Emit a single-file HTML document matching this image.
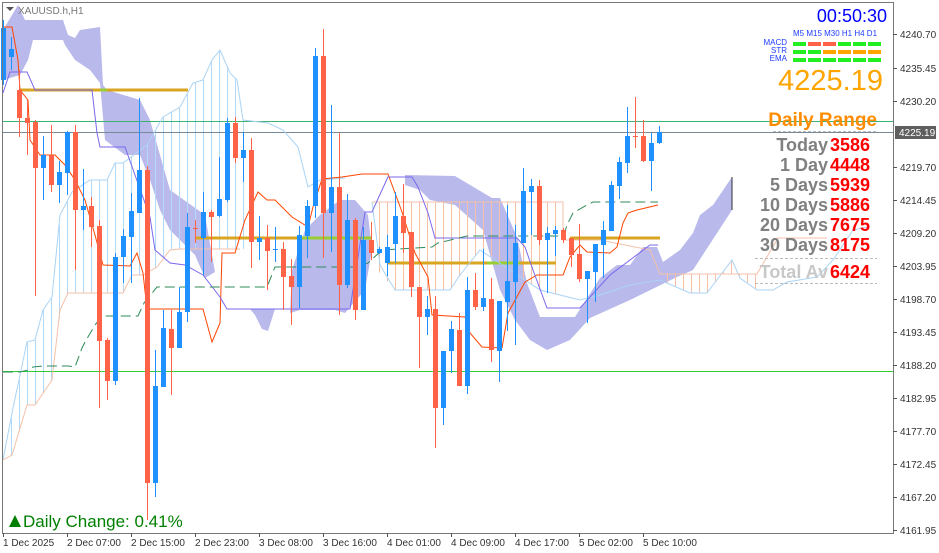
<!DOCTYPE html>
<html><head><meta charset="utf-8"><style>
body{margin:0;background:#fff;width:939px;height:553px;overflow:hidden;font-family:"Liberation Sans",sans-serif}
svg{position:absolute;left:0;top:0}
.ax{font:10px "Liberation Sans",sans-serif;fill:#333}
.b{font-weight:bold}
</style></head><body>
<svg id="s" width="939" height="553" xmlns="http://www.w3.org/2000/svg">
<rect x="0" y="0" width="939" height="553" fill="#fff"/>
<g fill="#b9b9ec">
<polygon points="3,30 18,5 25,20 33,20 63,20 68,35 75,38 80,30 100,27 103,85 107,90 140,100 150,120 170,190 205,215 215,272 205,278 195,255 185,245 170,230 160,210 150,180 140,155 125,155 105,140 100,83 90,70 75,60 65,45 63,40 33,40 28,60 20,75 3,80"/>
<polygon points="250,309 275,309 268,331 262,329 255,315"/>
<polygon points="292,270 305,230 320,215 340,200 355,200 368,215 372,250 365,290 345,313 335,310 300,310 290,313"/>
<polygon points="405,175 455,176 492,198 500,198 517,237 527,283 540,317 575,317 600,278 617,265 630,265 643,247 657,247 663,262 680,250 693,233 700,215 713,205 732,177 732,210 693,270 677,277 630,300 590,318 570,340 547,350 530,340 515,320 500,290 483,230 455,205 430,200 420,190 405,185"/>
</g>
<line x1="732" y1="177" x2="732" y2="210" stroke="#333"/>
<g id="hatch" stroke-width="1"></g>
<line x1="3" y1="121.5" x2="893" y2="121.5" stroke="#3cb371"/>
<line x1="3" y1="132.5" x2="893" y2="132.5" stroke="#778899"/>
<line x1="3" y1="371.5" x2="893" y2="371.5" stroke="#32cd32"/>
<g stroke="#daa520" stroke-width="3">
<line x1="20" y1="90" x2="188" y2="90"/>
<line x1="195" y1="238" x2="372" y2="238"/>
<line x1="387" y1="263" x2="556" y2="263"/>
<line x1="570" y1="238" x2="660" y2="238"/>
</g>
<g stroke="#9acd32" stroke-width="3">
<line x1="100" y1="90" x2="107" y2="90"/>
<line x1="302" y1="238" x2="372" y2="238"/>
<line x1="487" y1="263" x2="520" y2="263"/>
</g>
<g fill="none" stroke-width="1">
<polyline stroke="#aad4f5" points="3,460 13,408 27,342 35,340 43,310 52,297 60,215 72,192 90,180 107,180 115,163 123,163 147,145 163,117 180,107 193,83 203,80 212,60 220,50 230,73 237,80 243,120 268,123 283,130 298,147 308,187 320,180 345,178"/>
<polyline stroke="#f5c0a8" points="3,460 12,455 27,405 35,405 52,380 60,310 68,293 123,293 132,275 143,275 157,267 170,250 180,249 200,249 240,249"/>
<polyline stroke="#aad4f5" points="372,202 380,265 395,290 450,290 460,275 480,250 510,270 540,290 580,300 600,295 630,285 660,280 690,293 707,293 732,260 740,278 757,290 773,290 787,282 817,277 833,260 853,230 868,227"/>
<polyline stroke="#f5c0a8" points="372,202 563,202 563,240 600,240 650,250 660,274 757,274 778,238 827,238"/>
<polyline stroke="#ff4500" points="3,27 12,27 18,60 20,90 28,100 30,140 40,155 55,155 65,165 75,180 85,200 95,235 103,265 130,266 137,253 143,273 147,309 203,309 212,342 220,323 222,253 235,253 245,220 258,192 267,200 275,200 292,217 308,227 313,207 322,179 342,177 362,174 388,174 395,193 402,212 415,253 428,277 432,315 465,317 470,333 482,347 502,348 508,313 525,282 537,275 563,275 570,257 580,245 587,252 610,253 617,247 623,223 628,213 637,210 658,205"/>
<polyline stroke="#7b68ee" points="3,93 10,72 27,72 35,90 92,90 97,133 100,147 125,147 150,217 155,250 170,263 185,265 203,275 220,297 227,309 350,309 365,212 372,212 382,190 388,177 412,177 418,187 428,213 435,238 517,238 525,247 533,270 547,308 580,308 610,275 650,245 658,245"/>
<polyline stroke="#2e8b57" stroke-dasharray="10,5" points="3,372 20,372 28,370 33,367 43,366 68,366 75,367 82,348 85,342 95,325 102,316 138,316 144,303 157,287 267,287 275,267 358,267 368,263 382,250 432,247 438,243 467,236 563,236 568,223 573,213 587,205 593,202 658,202"/>
</g>
<g id="c"></g>
<rect x="2.5" y="2.5" width="891" height="531" fill="none" stroke="#777"/>
<g id="ax"></g>
<rect x="895" y="126" width="41" height="13" fill="#5f5f5f"/>
<text x="899" y="136" font-size="10" fill="#fff" font-family="Liberation Sans">4225.19</text>
<text x="18" y="14" font-size="10" fill="#777" font-family="Liberation Sans">XAUUSD.h,H1</text>
<polygon points="6,7 14,7 10,11" fill="#555"/>
<text x="887" y="22" font-size="18" fill="#0000ff" text-anchor="end">00:50:30</text>
<text x="793" y="36" font-size="8" fill="#1e3cff">M5 M15 M30 H1 H4 D1</text>
<text x="787" y="45" font-size="8" fill="#1e3cff" text-anchor="end">MACD</text>
<text x="787" y="53" font-size="8" fill="#1e3cff" text-anchor="end">STR</text>
<text x="787" y="61" font-size="8" fill="#1e3cff" text-anchor="end">EMA</text>
<g id="sq"></g>
<text x="883" y="90" font-size="29" fill="#ffa500" text-anchor="end">4225.19</text>
<text x="877" y="126" font-size="19" fill="#ff8c00" class="b" text-anchor="end">Daily Range</text>
<g stroke="#bbb" stroke-dasharray="3,2"><line x1="773" y1="131.5" x2="877" y2="131.5"/><line x1="755" y1="258.5" x2="877" y2="258.5"/><line x1="755" y1="283.5" x2="877" y2="283.5"/></g>
<g font-size="18" font-weight="bold">
<text x="828" y="151" fill="#808080" text-anchor="end">Today</text><text x="830" y="151" fill="#ff0000">3586</text>
<text x="828" y="171" fill="#808080" text-anchor="end">1 Day</text><text x="830" y="171" fill="#ff0000">4448</text>
<text x="828" y="191" fill="#808080" text-anchor="end">5 Days</text><text x="830" y="191" fill="#ff0000">5939</text>
<text x="828" y="211" fill="#808080" text-anchor="end">10 Days</text><text x="830" y="211" fill="#ff0000">5886</text>
<text x="828" y="231" fill="#808080" text-anchor="end">20 Days</text><text x="830" y="231" fill="#ff0000">7675</text>
<text x="828" y="251" fill="#808080" text-anchor="end">30 Days</text><text x="830" y="251" fill="#ff0000">8175</text>
<text x="828" y="278" fill="#c8c8c8" text-anchor="end">Total Av</text><text x="830" y="278" fill="#ff0000">6424</text>
</g>
<polygon points="9,527 21,527 15,515" fill="#008000"/>
<text x="23" y="527" font-size="17" fill="#008000">Daily Change: 0.41%</text>
</svg>
<script>
var NS="http://www.w3.org/2000/svg";
function el(p,t,a){var e=document.createElementNS(NS,t);for(var k in a)e.setAttribute(k,a[k]);p.appendChild(e);return e;}
var C=[[3,'b',28,80,20,85],[11,'b',49,57,37,70],[19,'r',90,118,70,137],[27,'r',118,123,100,155],[35,'r',122,168,120,296],[43,'b',155,168,136,200],[51,'r',155,185,125,192],[59,'b',172,185,161,203],[67,'b',132,173,131,195],[75,'r',132,210,125,270],[83,'b',206,210,169,230],[91,'r',206,227,197,247],[99,'r',226,341,220,408],[107,'r',340,381,338,400],[115,'b',257,381,253,385],[123,'b',236,257,229,283],[131,'b',211,237,193,283],[139,'b',170,213,98,213],[147,'r',170,483,166,520],[155,'b',386,483,350,497],[163,'b',328,387,310,387],[171,'r',329,348,310,395],[179,'b',312,348,287,348],[187,'b',227,312,213,322],[195,'r',228,229,220,243],[203,'b',212,238,192,275],[211,'r',212,217,210,262],[219,'b',199,216,157,217],[227,'b',123,200,118,202],[235,'r',123,158,117,163],[243,'b',150,158,132,182],[251,'r',150,242,138,268],[259,'b',238,242,216,260],[267,'r',238,251,225,290],[275,'b',249,250,227,262],[283,'r',249,277,242,310],[291,'r',276,287,259,325],[299,'b',235,287,226,308],[307,'b',206,236,200,258],[315,'b',56,206,48,218],[323,'r',56,213,29,258],[331,'b',187,213,105,252],[339,'r',187,285,133,315],[347,'b',220,285,194,288],[355,'r',220,310,218,320],[363,'b',240,310,227,310],[371,'r',240,253,222,260],[379,'b',249,253,247,254],[387,'b',247,263,235,276],[395,'b',216,244,192,263],[403,'r',216,233,184,253],[411,'r',232,287,232,297],[419,'r',287,317,287,368],[427,'b',309,317,296,335],[435,'r',309,408,296,448],[443,'b',351,408,351,425],[451,'b',329,351,321,373],[459,'r',330,386,313,386],[467,'b',290,386,277,394],[475,'r',290,307,273,310],[483,'b',298,307,249,311],[491,'r',299,350,278,362],[499,'b',301,351,301,382],[507,'b',281,302,205,331],[515,'b',243,282,225,345],[523,'b',191,243,168,243],[531,'b',186,192,179,235],[539,'r',186,240,180,245],[547,'b',233,240,227,293],[555,'b',230,234,226,256],[563,'r',230,240,228,243],[571,'r',238,255,238,267],[579,'r',254,279,224,282],[587,'b',271,279,271,323],[595,'b',244,272,244,302],[603,'b',230,245,221,278],[611,'b',185,231,181,231],[619,'b',162,186,157,199],[627,'b',136,163,107,173],[635,'r',136,137,97,148],[643,'r',136,161,120,162],[651,'b',143,161,133,191],[659,'b',132,143,126,144]];
var g=document.getElementById('c');
C.forEach(function(c){var col=c[1]=='r'?'#ff6347':'#1e90ff';
el(g,'rect',{x:c[0],y:c[4],width:1,height:c[5]-c[4],fill:col});
el(g,'rect',{x:c[0]-2,y:c[2],width:5,height:Math.max(1,c[3]-c[2]),fill:col});});
var h=document.getElementById('hatch');
function hatch(x0,x1,f1,f2,col){for(var x=x0;x<=x1;x+=8){el(h,'line',{x1:x+.5,x2:x+.5,y1:f1(x),y2:f2(x),stroke:col});}}
function interp(pts){return function(x){for(var i=1;i<pts.length;i++){if(x<=pts[i][0]){var a=pts[i-1],b=pts[i];return a[1]+(b[1]-a[1])*(x-a[0])/(b[0]-a[0]);}}return pts[pts.length-1][1];};}
var lb=interp([[3,460],[13,408],[27,342],[35,340],[43,310],[52,297],[60,215],[72,192],[90,180],[107,180],[115,163],[123,163],[147,145],[163,117],[180,107],[193,83],[203,80],[212,60],[220,50],[230,73],[237,80],[243,120],[250,249]]);
var pk=interp([[3,460],[12,455],[27,405],[35,405],[52,380],[60,310],[68,293],[123,293],[132,275],[143,275],[157,267],[170,250],[180,249],[250,249]]);
hatch(11,243,lb,pk,'#b4d8f8');
hatch(379,560,function(){return 202},interp([[372,265],[395,290],[450,290],[460,275],[480,250],[510,270],[540,290],[560,295]]),'#f5c0a8');
hatch(667,755,function(){return 274},interp([[660,280],[690,293],[707,293],[732,260],[740,278],[757,290]]),'#f5c0a8');
var ax=document.getElementById('ax');
var P=[['4240.70',34],['4235.45',68],['4230.20',101],['4219.70',167],['4214.45',200],['4209.20',233],['4203.95',266],['4198.70',299],['4193.45',332],['4188.20',365],['4182.95',398],['4177.70',431],['4172.45',464],['4167.20',497],['4161.95',530]];
P.forEach(function(p){el(ax,'line',{x1:893,x2:897,y1:p[1]+.5,y2:p[1]+.5,stroke:'#555'});var t=el(ax,'text',{x:900,y:p[1]+4,'class':'ax'});t.textContent=p[0];});
var T=[['1 Dec 2025',3],['2 Dec 07:00',67],['2 Dec 15:00',131],['2 Dec 23:00',195],['3 Dec 08:00',259],['3 Dec 16:00',323],['4 Dec 01:00',387],['4 Dec 09:00',451],['4 Dec 17:00',515],['5 Dec 02:00',579],['5 Dec 10:00',643]];
T.forEach(function(p){el(ax,'line',{x1:p[1]+.5,x2:p[1]+.5,y1:533,y2:537,stroke:'#555'});var t=el(ax,'text',{x:p[1],y:546,'class':'ax'});t.textContent=p[0];});
var sq=document.getElementById('sq');
var R=[['#22ee22','#ff6347','#ff6347','#22ee22','#22ee22','#22ee22'],['#22ee22','#22ee22','#ffa500','#ffa500','#ffa500','#ffa500'],['#22ee22','#22ee22','#22ee22','#22ee22','#22ee22','#22ee22']];
R.forEach(function(r,i){r.forEach(function(c,j){el(sq,'rect',{x:793+j*15,y:42+i*8,width:13,height:4,fill:c});});});
</script>
</body></html>
